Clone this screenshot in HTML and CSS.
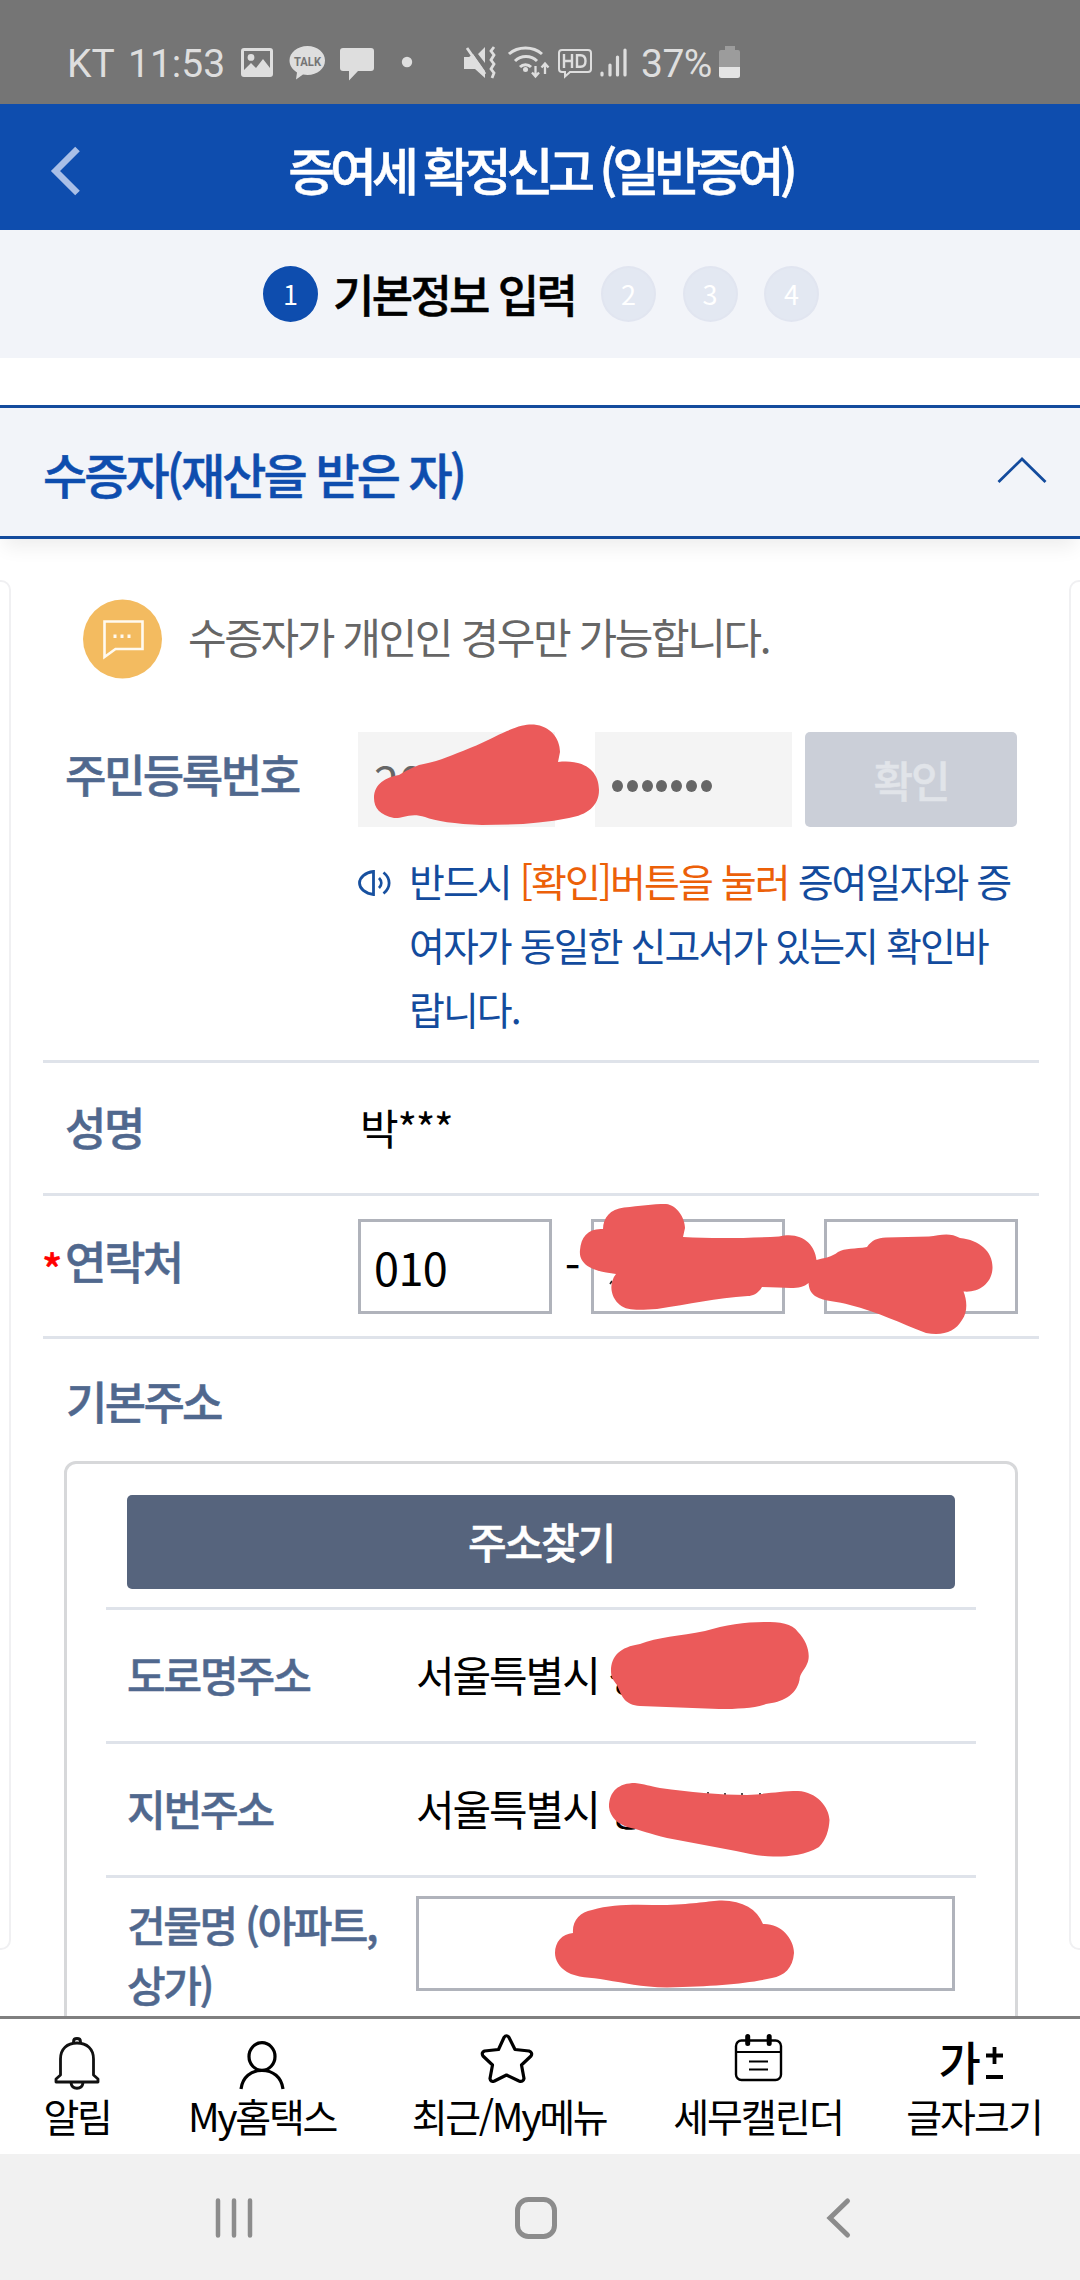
FILE: index.html
```html
<!DOCTYPE html>
<html lang="ko">
<head>
<meta charset="utf-8">
<title>증여세 확정신고 (일반증여)</title>
<link rel="stylesheet" href="styles.css">
</head>
<body>
<div class="screen">
  <div class="statusbar">
    <span class="status-text carrier">KT</span>
    <span class="status-text clock">11:53</span>
    <svg class="status-icons-left" width="180" height="44" viewBox="236 40 180 44">
      <path fill="#dedede" fill-rule="evenodd" d="M244 48h26a3 3 0 0 1 3 3v23a3 3 0 0 1-3 3h-26a3 3 0 0 1-3-3V51a3 3 0 0 1 3-3zM244 51v19l7-7 5 5 7-9 7 9V51zM251 54a3.400 3.400 0 1 1 0 6.800a3.400 3.400 0 1 1 0-6.800z"/>
      <path fill="#dedede" d="M307.500 46c10 0 17.500 6.500 17.500 14.500S317.500 75 307.500 75c-1.500 0-3-.2-4.500-.5L296 79.500l1-7c-4.500-3-7.500-7-7.500-12C289.500 52.500 297.500 46 307.500 46z"/>
      <text class="talk" x="294" y="65.500" textLength="27" lengthAdjust="spacingAndGlyphs">TALK</text>
      <path fill="#dedede" d="M343 48h28a3 3 0 0 1 3 3v17a3 3 0 0 1-3 3h-13l-9 9.500V71h-6a3 3 0 0 1-3-3V51a3 3 0 0 1 3-3z"/>
      <circle cx="407" cy="62" r="5.200" fill="#dedede"/>
    </svg>
    <svg class="status-icons-right" width="172" height="44" viewBox="460 40 172 44">
      <path fill="#dedede" d="M464 57h5l4-3 12 17v7l-10-9h-11zM485 47v16l-7-9z"/>
      <path fill="none" stroke="#dedede" stroke-width="2.800" d="M467 48l18 26M494 47l-3 4 3 4-3 5 3 4-3 5 3 4-2 5"/>
      <path fill="none" stroke="#dedede" stroke-width="3" d="M509 54c9-8 24-8 33 0M515 61c6-6 16-6 22 0M520 67c3-3 8-3 11 0"/>
      <circle cx="525.500" cy="69.500" r="2.500" fill="#dedede"/>
      <path fill="none" stroke="#dedede" stroke-width="2.300" d="M535.500 66v10M532 72.500l3.500 4 3.500-4M545 74V64M541.500 67.500l3.500-4 3.500 4"/>
      <path fill="none" stroke="#dedede" stroke-width="2" d="M562 50h26a3 3 0 0 1 3 3v16a3 3 0 0 1-3 3h-18l-5 4.500V72h-3a3 3 0 0 1-3-3V53a3 3 0 0 1 3-3z"/>
      <path fill="none" stroke="#dedede" stroke-width="2.400" d="M564 54v14M572 54v14M564 61h8M577 55.200h3.500c3.500 0 5 2.500 5 5.800s-1.500 5.800-5 5.800H577z"/>
      <path stroke="#dedede" stroke-width="3.200" stroke-linecap="round" d="M602 73v2M610 65v10M617.500 57v18M625 50v25"/>
    </svg>
    <span class="status-text percent">37%</span>
    <svg width="22" height="36" viewBox="719 44 22 36">
      <path fill="#9c9c9c" d="M725 46h10v4h3a2 2 0 0 1 2 2v15h-21V52a2 2 0 0 1 2-2h4z"/>
      <path fill="#e4e4e4" d="M719 67h21v8.500a2.500 2.500 0 0 1-2.500 2.500h-16a2.500 2.500 0 0 1-2.500-2.500z"/>
    </svg>
  </div>

  <header class="appbar">
    <svg class="back" width="34" height="54" viewBox="0 0 34 54"><path d="M29.500 5L7.500 27l22 22" fill="none" stroke="#a9bfe7" stroke-width="6.500"/></svg>
    <h1>증여세 확정신고 (일반증여)</h1>
  </header>

  <div class="stepper">
    <span class="step active">1</span>
    <strong class="step-name">기본정보 입력</strong>
    <span class="step">2</span>
    <span class="step">3</span>
    <span class="step">4</span>
  </div>

  <div class="accordion">
    <h2>수증자(재산을 받은 자)</h2>
    <svg width="50" height="28" viewBox="0 0 50 28"><path d="M1.500 26L25 3l23.500 23" fill="none" stroke="#134b9d" stroke-width="2.800"/></svg>
  </div>

  <main class="content">
    <i class="neighbor prev"></i>
    <i class="neighbor next"></i>
    <div class="notice">
      <svg width="80" height="80" viewBox="0 0 80 80">
        <circle cx="39.500" cy="40" r="39.500" fill="#f3bb60"/>
        <path d="M21.500 22.500h38V50H32.500L21.500 58z" fill="none" stroke="#fffaf0" stroke-width="2.600"/>
        <path d="M32 35.500v3.500M39 35.500v3.500M46 35.500v3.500" stroke="#fffaf0" stroke-width="3"/>
      </svg>
      <span>수증자가 개인인 경우만 가능합니다.</span>
    </div>

    <div class="row row-id">
      <div class="label">주민등록번호</div>
      <div>
        <div class="id-line">
          <div class="readonly front">20</div>
          <div class="readonly mask"><i></i><i></i><i></i><i></i><i></i><i></i><i></i></div>
          <button class="confirm">확인</button>
        </div>
        <div class="guide">
          <svg width="34" height="30" viewBox="0 0 34 30" fill="none" stroke="#17509f" stroke-width="2.800">
            <path d="M15.500 3.500v23C7 25.500 1.500 20.500 1.500 15S7 4.500 15.500 3.500z"/><path d="M21 10c3 3 3 7 0 10M25.500 4.500c7.500 6 7.500 15 0 21"/>
          </svg>
          <p>반드시 <em>[확인]버튼을 눌러</em> 증여일자와 증<br>여자가 동일한 신고서가 있는지 확인바<br>랍니다.</p>
        </div>
      </div>
    </div>

    <div class="row row-name">
      <div class="label">성명</div>
      <div class="value">박***</div>
    </div>

    <div class="row row-phone">
      <div class="label"><span class="required">*</span>연락처</div>
      <div class="phone">
        <div class="input">010</div><span class="dash">-</span><div class="input"></div><span class="dash">-</span><div class="input"></div>
      </div>
    </div>

    <div class="address-title">기본주소</div>
    <div class="address">
      <button class="find">주소찾기</button>
      <div class="addr-row"><div class="label">도로명주소</div><div>서울특별시 성</div></div>
      <div class="addr-row"><div class="label">지번주소</div><div>서울특별시 성</div></div>
      <div class="addr-row building"><div class="label">건물명 (아파트,<br>상가)</div><div class="input"></div></div>
    </div>
  </main>

  <nav class="tabs">
    <a class="tab t1">
      <svg width="52" height="58" viewBox="50 2034 52 58" fill="none" stroke="#111" stroke-width="2.800" stroke-linejoin="round">
        <path d="M59.500 2075v-16c0-10 6.500-16 16.500-16s16.500 6 16.500 16v16l4.500 4v3H55v-3zM72.500 2043v-1.500c0-4 7-4 7 0v1.500M70 2083c1 7 11 7 12 0"/>
      </svg><span>알림</span></a>
    <a class="tab t2">
      <svg width="52" height="58" viewBox="236 2034 52 58" fill="none" stroke="#000" stroke-width="3.200">
        <ellipse cx="262" cy="2056.500" rx="13" ry="13.800"/><path d="M241 2089c1.500-12 10-18.500 21-18.500s19.500 6.500 21 18.500"/>
      </svg><span>My홈택스</span></a>
    <a class="tab t3">
      <svg width="58" height="58" viewBox="481 2034 58 58" fill="none" stroke="#000" stroke-width="3.200" stroke-linejoin="round">
        <path d="M505 2037.500q2.500-3.500 5 0l6 12 14 1.500q4 1.500 2 5l-9.500 9 2.500 13.500q-1 4-5 2.500L507.500 2075l-12 6q-4 1.500-4.500-2.500l2.500-13.500-9.500-9q-2-3.500 1.500-5l14-1.500z"/>
      </svg><span>최근/My메뉴</span></a>
    <a class="tab t4">
      <svg width="52" height="58" viewBox="731 2034 52 58" fill="none" stroke="#000">
        <rect x="735" y="2040.500" width="45" height="39.500" rx="5.500" stroke-width="2.400"/>
        <path stroke-width="1.800" d="M736 2052h43M748 2061.500h19M748 2069.500h19"/>
        <path stroke-width="5" stroke-linecap="round" d="M746.700 2036.500v7M768.200 2036.500v7"/>
      </svg><span>세무캘린더</span></a>
    <a class="tab t5">
      <span class="size-icon">가<svg width="18" height="34" viewBox="0 0 18 34"><path d="M0 9.500h17M8.500 1v17M0 31h17" stroke="#000" stroke-width="3.800"/></svg></span><span>글자크기</span></a>
  </nav>

  <div class="sysnav">
    <svg width="1080" height="126" viewBox="0 2154 1080 126" fill="none" stroke="#8c8c8c" stroke-linecap="round">
      <path stroke-width="4.500" d="M218 2200.500v35M234 2200.500v35M250 2200.500v35"/>
      <rect stroke-width="5" x="517.500" y="2199.500" width="37" height="37" rx="11"/>
      <path stroke-width="5" d="M847.500 2201l-17.500 17 17.500 17"/>
    </svg>
  </div>

  <svg class="scribbles" width="1080" height="2280" viewBox="0 0 1080 2280">
    <g stroke="#222" stroke-width="1.600"><path d="M610 1284l2-3M708 1792v3M725 1793v3M742 1793v4M760 1793v4M690 1793v1"/></g>
    <g fill="#eb5a5a">
      <path d="M374 798C374 784 386 777 399 775C406 771 411 768 419 765C440 761 450 756 470 748C488 741 495 736 507 731C520 725 528 724 534 724.500C550 726 560 738 560 752L558 762C583 759 599 770 599 790C599 806 587 815 569 818C540 824 510 825 482 825C455 824 435 821 425 817C410 812 402 819 394 818C380 815 374 808 374 798Z"/>
      <path d="M580 1250C581 1237 588 1228 603 1229C603 1218 610 1209 624 1207.500C640 1206 652 1204 666 1204C677 1205 685 1218 685 1228L683 1237C715 1239 750 1238 779 1236.500C801 1231 815 1244 816.500 1260C824 1258 832 1257 838 1252C845 1248 855 1249 867 1247C872 1240 877 1238 886 1237.500L929 1236.500C940 1235 950 1232 960 1238C980 1240 993 1252 992.500 1268C992 1284 978 1293 963.500 1291.500C967 1300 968 1312 962 1320C955 1332 943 1336 926 1333C900 1323 878 1312 850 1305C838 1301 825 1302 815 1296C810 1292 809 1288 808.500 1283C800 1291 785 1287 762 1287C758 1294 752 1296 748 1296C715 1298 690 1304 657 1309C640 1310 627 1311 620 1305C611 1298 608 1284 616 1274C600 1272 578 1268 580 1250Z"/>
      <path d="M611 1671C611 1656 620 1647 640 1644C657 1637 680 1636 705 1631C725 1625 745 1622 764 1622C780 1622 792 1623 798 1632C808 1642 811 1656 807 1664C804 1671 800 1673 799.500 1680C796 1696 782 1702 766 1704C755 1708 738 1709 719 1709L640 1706C625 1705 622 1697 617 1685C613 1680 611 1677 611 1671Z"/>
      <path d="M609 1807C609 1791 619 1783 635 1783C645 1784 649 1786 660 1788C690 1792 718 1795 747 1795C767 1794 780 1791 798 1791C817 1792 829 1807 829.500 1820C829 1830 826 1840 819 1847C806 1855 790 1856.500 776 1856.500C763 1857 750 1854 736 1851L667 1838C650 1834 640 1830 631 1828C618 1825 610 1817 609 1807Z"/>
      <path d="M555 1953C555 1942 562 1934 573 1933C572 1921 580 1912 592 1910C615 1903 640 1905 667 1905C695 1904 708 1901 722 1900.500C743 1901 757 1909 763 1924C780 1923 794 1938 794 1953C793 1968 784 1976 772 1978C745 1984 715 1986 667 1987.500C640 1987 625 1983 606 1980C590 1977 577 1978 567 1972C559 1967 555 1960 555 1953Z"/>
    </g>
  </svg>
</div>
</body>
</html>
```
FILE: styles.css
```css
* { box-sizing: border-box; letter-spacing: -0.05em; }
body { margin: 0; font-family: "Noto Sans CJK KR", "Noto Sans", sans-serif; color: #000; background: #fff; }
h1, h2, p { margin: 0; font-weight: 500; }
button { border: 0; padding: 0; font: inherit; display: block; }
em { font-style: normal; color: #ec6008; }
h1, h2, .step-name, .label, .address-title, .confirm, .find { -webkit-text-stroke: 0.5px currentColor; }
.screen { position: relative; width: 1080px; height: 2280px; overflow: hidden; display: flex; flex-direction: column; }

.statusbar { flex: none; height: 104px; background: #757575; display: flex; align-items: center; padding: 20px 0 0 67px; font-family: Roboto, sans-serif; font-size: 39px; color: #dedede; }
.status-text { line-height: 46px; padding-top: 3px; white-space: nowrap; letter-spacing: 0; }
.carrier { width: 61px; }
.clock { width: 108px; }
.status-icons-left { margin-right: 44px; }
.percent { margin-left: 9px; width: 78px; letter-spacing: -0.5px; }
.talk { font: 700 12px Roboto, sans-serif; fill: #757575; letter-spacing: 0; }

.appbar { flex: none; height: 126px; background: #0e4dae; display: grid; grid-template-columns: 80px 1fr 80px; align-items: center; }
.back { margin-left: 48px; margin-top: 8px; }
.appbar h1 { color: #fff; font-size: 51px; line-height: 70px; letter-spacing: -0.1em; padding: 4px 0 0 1px; text-align: center; white-space: nowrap; }

.stepper { flex: none; height: 128px; background: #f2f4f9; display: flex; align-items: center; padding-left: 263px; }
.step { width: 55px; height: 56px; border-radius: 50%; margin-right: 26.500px; background: #e3e8f2; border: 2px solid #e1e5f0; color: #fff; font-size: 27px; line-height: 51px; text-align: center; letter-spacing: 0; }
.step.active { background: #0e4dae; border-color: #0e4dae; margin-right: 15px; }
.step-name { font-weight: 500; font-size: 45px; line-height: 60px; margin-top: -1px; width: 268px; white-space: nowrap; letter-spacing: -0.06em; }

.accordion { position: relative; flex: none; margin-top: 47px; height: 134px; border-top: 3px solid #134b9d; border-bottom: 3px solid #134b9d; background: #f2f4f9; box-shadow: 0 12px 18px -4px rgba(0,0,0,.07); display: flex; align-items: center; justify-content: space-between; padding: 0 33px 0 43px; }
.accordion h2 { color: #0e4dae; font-size: 48px; line-height: 60px; margin-top: 2px; letter-spacing: -0.06em; }
.accordion svg { margin-top: -5px; }

.content { position: relative; flex: none; height: 1477px; overflow: hidden; padding: 60px 41px 0 43px; }
.neighbor { position: absolute; top: 41px; width: 60px; height: 1370px; border: 2px solid #f0f0f2; border-radius: 10px; }
.prev { left: -49px; }
.next { left: 1069px; }
.notice { height: 80px; margin-left: 40px; display: flex; align-items: center; gap: 25px; font-size: 42px; color: #666; white-space: nowrap; }
.notice span { line-height: 60px; margin-top: -6px; letter-spacing: -0.057em; }

.row { display: grid; grid-template-columns: 293px 1fr; padding-left: 22px; border-bottom: 3px solid #dfe3ea; font-size: 45px; }
.label { color: #50688e; font-weight: 500; white-space: nowrap; }
.row .label { letter-spacing: -0.055em; }
.row-id { height: 384px; padding-top: 53px; }
.row-id .label { line-height: 84px; }
.id-line { display: flex; }
.readonly { height: 95px; background: #f4f4f4; color: #666; line-height: 97px; letter-spacing: 0; }
.front { width: 197px; margin-right: 40px; padding-left: 16px; }
.mask { width: 197px; margin-right: 13px; display: flex; gap: 3.800px; padding: 48px 0 0 17px; }
.mask i { width: 11px; height: 12px; border-radius: 50%; background: #666; }
.confirm { width: 212px; height: 95px; border-radius: 5px; background: #cbcfd8; color: #e1e4e9; font-size: 43px; font-weight: 500; line-height: 88px; padding-bottom: 2px; }
.guide { display: flex; margin-top: 22px; font-size: 39px; line-height: 64px; color: #134b9d; }
.guide svg { margin: 19px 17px 0 0; flex: none; }
.guide p { font-weight: 400; white-space: nowrap; margin-top: -1px; }
.row-name { height: 133px; line-height: 128px; }
.value { font-size: 42px; padding-left: 2px; letter-spacing: -0.03em; }
.row-phone { height: 143px; padding-top: 23px; }
.row-phone .label { position: relative; line-height: 83px; }
.required { position: absolute; left: -23px; top: 7px; font-size: 42px; color: #f00; }
.phone { display: flex; }
.input { height: 95px; border: 3px solid #b0b3bb; background: #fff; }
.phone .input { width: 194px; padding-left: 13px; line-height: 90px; letter-spacing: -0.6px; }
.dash { width: 39px; line-height: 92px; text-align: center; }

.address-title { color: #50688e; font-weight: 500; font-size: 45px; line-height: 124px; height: 122px; padding-left: 23px; letter-spacing: -0.06em; }
.address { margin: 0 21px; height: 700px; border: 3px solid #d7d8da; border-radius: 12px; padding: 31px 39px 0; font-size: 42px; }
.find { width: 828px; height: 94px; margin: 0 0 18px 21px; padding-bottom: 2px; border-radius: 5px; background: #56647d; color: #fff; font-weight: 500; line-height: 90px; }
.addr-row { height: 134px; border-top: 3px solid #dfe3ea; display: grid; grid-template-columns: 289px 1fr; padding-left: 21px; line-height: 127px; white-space: nowrap; }
.addr-row .input { margin: 18px 21px 0 0; }
.building .label { line-height: 60px; padding-top: 16px; letter-spacing: -0.058em; }

.tabs { position: relative; flex: none; height: 138px; border-top: 3px solid #808080; background: #fff; display: flex; padding-top: 15px; font-size: 39px; line-height: 46px; }
.tab { flex: none; display: flex; flex-direction: column; align-items: center; white-space: nowrap; }
.tab > span { letter-spacing: -0.06em; }
.tab svg { display: block; }
.t1 { width: 154px; }
.t2 { width: 216px; }
.t3 { width: 278px; }
.t4 { width: 220px; }
.t5 { width: 212px; }
.t4 > span, .t5 > span { letter-spacing: -0.05em; }
.size-icon { height: 58px; display: flex; font-size: 46px; line-height: 52px; font-weight: 500; gap: 7px; margin-left: -6px; }
.size-icon svg { margin-top: 12px; }
.sysnav { flex: none; height: 126px; background: #f1f1f1; }
.sysnav svg { display: block; }
.scribbles { position: absolute; left: 0; top: 0; }
```
